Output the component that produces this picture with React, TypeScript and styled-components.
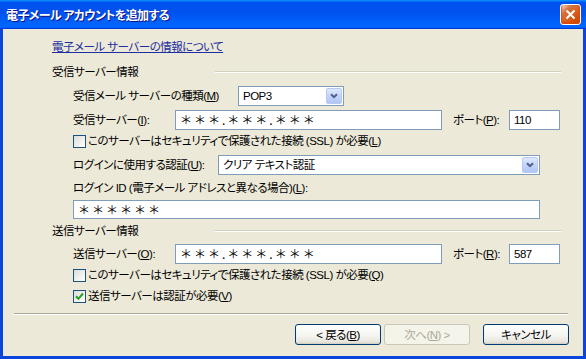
import React from "react";
import styled, { createGlobalStyle } from "styled-components";

const GlobalStyle = createGlobalStyle`
  html, body {
    margin: 0;
    padding: 0;
  }
  body {
    width: 586px;
    height: 359px;
    overflow: hidden;
    font-family: "Liberation Sans", "Noto Sans CJK JP", sans-serif;
    font-size: 11.5px;
    letter-spacing: -0.5px;
    font-feature-settings: "palt";
    color: #000;
  }
`;

const Frame = styled.div`
  width: 586px;
  height: 359px;
  box-sizing: border-box;
  display: flex;
  flex-direction: column;
  background: #0a46dc;
`;

const TitleBar = styled.div`
  height: 29px;
  flex-shrink: 0;
  display: flex;
  align-items: center;
  justify-content: space-between;
  padding: 0 5px 0 6px;
  background: linear-gradient(
    180deg,
    #0997ff,
    #0053ee 8%,
    #0050ee 40%,
    #0066ff 88%,
    #0066ff 93%,
    #005bff 95%,
    #003dd7 96%,
    #003dd7
  );
`;

const TitleText = styled.div`
  color: #fff;
  font-family: "Noto Sans CJK JP", sans-serif;
  font-size: 12px;
  font-weight: 700;
  letter-spacing: -0.6px;
  text-shadow: 1px 1px #0f1089;
`;

const CloseButton = styled.div`
  width: 21px;
  height: 21px;
  box-sizing: border-box;
  border: 1px solid #fff;
  border-radius: 3px;
  display: flex;
  align-items: center;
  justify-content: center;
  background: radial-gradient(
    circle at 90% 90%,
    #cc4600 0,
    #dc6527 55%,
    #cd7546 70%,
    #ffccb2 90%,
    #fff 100%
  );
  box-shadow: inset 0 -1px 2px 1px #da4600;
`;

const Body = styled.div`
  flex: 1;
  margin: 0 3px 3px 3px;
  background: #ece9d8;
  display: flex;
  flex-direction: column;
`;

const Form = styled.div`
  padding: 0 22px 0 49px;
  display: flex;
  flex-direction: column;
`;

const Row = styled.div<{ $top: number; $h?: number; $indent?: boolean }>`
  display: flex;
  align-items: center;
  height: ${p => p.$h ?? 20}px;
  margin-top: ${p => p.$top}px;
  padding-left: ${p => (p.$indent ? 21 : 0)}px;
  line-height: 14px;
  white-space: nowrap;
`;

const Link = styled.a`
  color: #1d2fa0;
  text-decoration: underline;
  cursor: pointer;
`;

const SectionLabel = styled.div`
  width: 163px;
  flex-shrink: 0;
`;

const SectionLine = styled.div`
  flex: 1;
  height: 0;
  border-top: 1px solid #d0d0bf;
  border-bottom: 1px solid #fff;
`;

const Label = styled.div<{ $w?: number }>`
  width: ${p => (p.$w ? `${p.$w}px` : "auto")};
  flex-shrink: 0;
`;

const TextBox = styled.div<{ $w: number; $h?: number }>`
  width: ${p => p.$w}px;
  height: ${p => p.$h ?? 20}px;
  box-sizing: border-box;
  border: 1px solid #7f9db9;
  background: #fff;
  display: flex;
  align-items: center;
  padding-left: 4px;
  flex-shrink: 0;
`;

const Masked = styled.span`
  font-family: "Noto Sans CJK JP", sans-serif;
  font-feature-settings: normal;
  letter-spacing: 2px;
  font-size: 12px;
`;

const Combo = styled.div<{ $w: number }>`
  width: ${p => p.$w}px;
  height: 20px;
  box-sizing: border-box;
  border: 1px solid #7f9db9;
  background: #fff;
  display: flex;
  align-items: center;
  justify-content: space-between;
  padding-left: 4px;
  flex-shrink: 0;
`;

const ComboArrow = styled.div`
  width: 16px;
  height: 16px;
  margin: 1px;
  box-sizing: border-box;
  border: 1px solid #b6c9f5;
  border-radius: 2px;
  background: linear-gradient(180deg, #dfe8fd 0%, #c3d3fb 50%, #b1c6f6 100%);
  display: flex;
  align-items: center;
  justify-content: center;
`;

const PortLabel = styled.div`
  margin-left: 11px;
  width: 56px;
  flex-shrink: 0;
`;

const CheckBox = styled.div`
  width: 13px;
  height: 13px;
  box-sizing: border-box;
  border: 1px solid #1c5180;
  background: linear-gradient(135deg, #dcdcd7 0%, #fff 100%);
  margin-right: 2px;
  display: flex;
  align-items: center;
  justify-content: center;
  flex-shrink: 0;
`;

const Divider = styled.div`
  margin: 10px 15px 0 11px;
  border-top: 1px solid #aca899;
  border-bottom: 1px solid #fff;
`;

const ButtonBar = styled.div`
  display: flex;
  justify-content: flex-end;
  align-items: center;
  margin-top: 9px;
  padding-right: 14px;
`;

const Button = styled.div<{ $disabled?: boolean; $gap?: number }>`
  width: 86px;
  height: 21px;
  box-sizing: border-box;
  margin-left: ${p => p.$gap ?? 0}px;
  border: 1px solid ${p => (p.$disabled ? "#c9c7ba" : "#003c74")};
  border-radius: 3px;
  display: flex;
  align-items: center;
  justify-content: center;
  color: ${p => (p.$disabled ? "#aca899" : "#000")};
  background: ${p =>
    p.$disabled
      ? "#f5f4ea"
      : "linear-gradient(180deg, #fff 0%, #f3f3ef 60%, #e6e5dd 90%, #d6d0c5 100%)"};
  box-shadow: ${p =>
    p.$disabled ? "none" : "inset 0 -1px 1px #d6d0c5, inset 0 1px 1px #fff"};
  line-height: 14px;
  white-space: nowrap;
`;

const Chevron = () => (
  <svg width="8" height="6" viewBox="0 0 8 6">
    <path d="M1 1.2 L4 4.2 L7 1.2" fill="none" stroke="#4d6185" strokeWidth="2" />
  </svg>
);

const Tick = () => (
  <svg width="9" height="9" viewBox="0 0 9 9">
    <path d="M1 4.2 L3.4 6.8 L8 1.5" fill="none" stroke="#21a121" strokeWidth="2" />
  </svg>
);

const CloseX = () => (
  <svg width="11" height="11" viewBox="0 0 11 11">
    <path d="M1.5 1.5 L9.5 9.5 M9.5 1.5 L1.5 9.5" stroke="#fff" strokeWidth="2" />
  </svg>
);

const SERVER = "＊＊＊.＊＊＊.＊＊＊";

export default function App() {
  return (
    <>
      <GlobalStyle />
      <Frame>
        <TitleBar>
          <TitleText>電子メール アカウントを追加する</TitleText>
          <CloseButton>
            <CloseX />
          </CloseButton>
        </TitleBar>
        <Body>
          <Form>
            <Row $top={11} $h={14}>
              <Link>電子メール サーバーの情報について</Link>
            </Row>

            <Row $top={11} $h={14}>
              <SectionLabel>受信サーバー情報</SectionLabel>
              <SectionLine />
            </Row>

            <Row $top={7} $indent>
              <Label $w={165}>
                受信メール サーバーの種類(<u>M</u>)
              </Label>
              <Combo $w={106}>
                <span>POP3</span>
                <ComboArrow>
                  <Chevron />
                </ComboArrow>
              </Combo>
            </Row>

            <Row $top={4} $indent>
              <Label $w={102}>
                受信サーバー(<u>I</u>):
              </Label>
              <TextBox $w={267}>
                <Masked>{SERVER}</Masked>
              </TextBox>
              <PortLabel>
                ポート(<u>P</u>):
              </PortLabel>
              <TextBox $w={51}>110</TextBox>
            </Row>

            <Row $top={4} $h={14} $indent>
              <CheckBox />
              <Label>
                このサーバーはセキュリティで保護された接続 (SSL) が必要(<u>L</u>)
              </Label>
            </Row>

            <Row $top={7} $indent>
              <Label $w={145}>
                ログインに使用する認証(<u>U</u>):
              </Label>
              <Combo $w={322}>
                <span>クリア テキスト認証</span>
                <ComboArrow>
                  <Chevron />
                </ComboArrow>
              </Combo>
            </Row>

            <Row $top={6} $h={14} $indent>
              <Label>
                ログイン ID (電子メール アドレスと異なる場合)(<u>L</u>):
              </Label>
            </Row>

            <Row $top={5} $h={19} $indent>
              <TextBox $w={467} $h={19}>
                <Masked>＊＊＊＊＊＊</Masked>
              </TextBox>
            </Row>

            <Row $top={5} $h={14}>
              <SectionLabel>送信サーバー情報</SectionLabel>
              <SectionLine />
            </Row>

            <Row $top={6} $indent>
              <Label $w={102}>
                送信サーバー(<u>O</u>):
              </Label>
              <TextBox $w={267}>
                <Masked>{SERVER}</Masked>
              </TextBox>
              <PortLabel>
                ポート(<u>R</u>):
              </PortLabel>
              <TextBox $w={51}>587</TextBox>
            </Row>

            <Row $top={4} $h={14} $indent>
              <CheckBox />
              <Label>
                このサーバーはセキュリティで保護された接続 (SSL) が必要(<u>Q</u>)
              </Label>
            </Row>

            <Row $top={7} $h={14} $indent>
              <CheckBox>
                <Tick />
              </CheckBox>
              <Label>
                送信サーバーは認証が必要(<u>V</u>)
              </Label>
            </Row>
          </Form>

          <Divider />

          <ButtonBar>
            <Button>
              &lt; 戻る(<u>B</u>)
            </Button>
            <Button $disabled $gap={3}>
              次へ(<u>N</u>) &gt;
            </Button>
            <Button $gap={13}>キャンセル</Button>
          </ButtonBar>
        </Body>
      </Frame>
    </>
  );
}
